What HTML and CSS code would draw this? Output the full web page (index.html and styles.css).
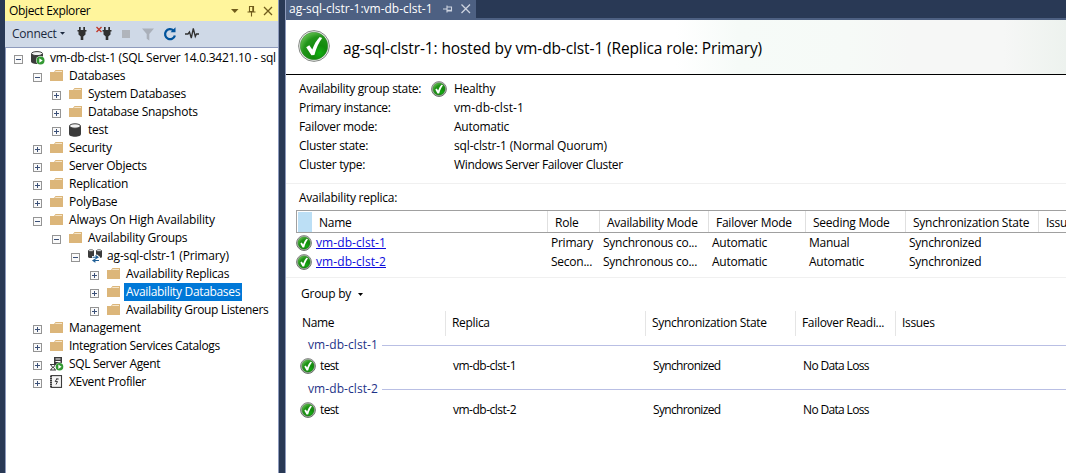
FILE: index.html
```html
<!DOCTYPE html>
<html lang="en">
<head>
<meta charset="utf-8">
<title>ag-sql-clstr-1:vm-db-clst-1</title>
<link rel="stylesheet" href="styles.css">
</head>
<body>
<svg class="defs" width="0" height="0" aria-hidden="true">
  <defs>
    <radialGradient id="green" cx="0.7" cy="0.75" r="0.9">
      <stop offset="0" stop-color="#12b012"/><stop offset="0.3" stop-color="#128a0c"/><stop offset="0.65" stop-color="#22951a"/><stop offset="1" stop-color="#7fd266"/>
    </radialGradient>
    <linearGradient id="ring" x1="0" y1="0" x2="0" y2="1">
      <stop offset="0" stop-color="#8c8c8c"/><stop offset="1" stop-color="#5f6660"/>
    </linearGradient>
    <symbol id="ok-big" viewBox="0 0 32 32">
      <circle cx="16" cy="16" r="15.400" fill="#f4f4f4" stroke="#777c77" stroke-width="0.9"/>
      <circle cx="16" cy="16" r="13.800" fill="url(#green)" stroke="#2f7d2c" stroke-width="0.5"/>
      <path d="M8.200 17.200l3.100-1.900 3 4.200c1.800-5.200 4.200-9.300 7.400-12.600l2.500 1c-3.300 4.300-6 10-7.800 17.100l-3 .2z" fill="#fff"/>
    </symbol>
    <symbol id="ok" viewBox="0 0 16 16">
      <circle cx="8" cy="8" r="7.400" fill="#c3c9c3" stroke="url(#ring)" stroke-width="1"/>
      <circle cx="8" cy="8" r="6.200" fill="url(#green)" stroke="#2f6b2c" stroke-width="0.4"/>
      <path d="M4.300 8.400l1.500-.8 1.300 2c.9-2.500 1.900-4.300 3.400-5.900l1.500.5c-1.600 2.300-2.900 4.900-3.800 8.200h-1.700z" fill="#fff"/>
    </symbol>
    <symbol id="plus" viewBox="0 0 9 9">
      <rect x="0.5" y="0.500" width="8" height="8" fill="#fafafa" stroke="#949494"/>
      <path d="M2 4.500h5M4.500 2v5" stroke="#3b5078" fill="none"/>
    </symbol>
    <symbol id="minus" viewBox="0 0 9 9">
      <rect x="0.5" y="0.500" width="8" height="8" fill="#fafafa" stroke="#949494"/>
      <path d="M2 4.500h5" stroke="#3b5078" fill="none"/>
    </symbol>
    <symbol id="folder" viewBox="0 0 14 14">
      <path d="M0 3h4L5.500 1H13v11H0z" fill="#dcb67a"/><path d="M5.300 2.500H12" stroke="#f5e6cb"/>
    </symbol>
    <symbol id="db" viewBox="0 0 14 14">
      <path d="M0 3v8c0 1.700 2.700 2.800 6 2.800s6-1.100 6-2.800V3z" fill="#3b3b3b"/>
      <ellipse cx="6" cy="3" rx="5.500" ry="2.200" fill="#f3f3f3" stroke="#3b3b3b"/>
    </symbol>
    <symbol id="server" viewBox="0 0 14 14">
      <path d="M0 3v7.500C0 12 2.500 13 5.500 13S12 12 12 10.500V3z" fill="#3b3b3b"/>
      <ellipse cx="6" cy="2.600" rx="5.500" ry="2" fill="#f3f3f3" stroke="#3b3b3b"/>
      <circle cx="9.500" cy="9.500" r="4.500" fill="#fff"/><circle cx="9.500" cy="9.500" r="4" fill="#339933"/>
      <path d="M8.300 7.300v4.400l3.400-2.200z" fill="#fff"/>
    </symbol>
    <symbol id="group" viewBox="0 0 14 14">
      <path d="M0 1.600v6c0 1 1 1.500 3 1.500s3-.5 3-1.500v-6z M8 1.600v6c0 1 1 1.500 3 1.500s3-.5 3-1.500v-6z" fill="#3b3b3b"/>
      <ellipse cx="3" cy="1.600" rx="2.500" ry=".9" fill="#fff" stroke="#3b3b3b" stroke-width=".7"/><ellipse cx="11" cy="1.600" rx="2.500" ry=".9" fill="#fff" stroke="#3b3b3b" stroke-width=".7"/>
      <path d="M4 8.200h5M8 6.200l2.500 2L8 10.200M11 11H6M7.500 9l-2.500 2 2.500 2" stroke="#fff" stroke-width="2.500" fill="none"/>
      <path d="M4.500 8.300H9M7.500 6.500l2.500 1.800-2.500 1.500M11 11.500H6M7.500 10L5 11.500l2.500 1.700" stroke="#1f5f96" stroke-width="1.100" fill="none"/>
    </symbol>
    <symbol id="agent" viewBox="0 0 14 14">
      <path d="M4 0h8v9H4z" fill="#3b3b3b"/><path d="M5.500 2h5M5.500 4.500h5" stroke="#fff"/>
      <path d="M0 7h6v6.500H0z" fill="#fff"/><path d="M0 7.500h6M0 13h6M1 8c0 2.500 4 2 4 5M5 8c0 2.500-4 2-4 5" stroke="#3b3b3b" fill="none"/>
      <circle cx="9.500" cy="9.800" r="4.300" fill="#fff"/><circle cx="9.500" cy="9.800" r="3.800" fill="#339933"/><path d="M8.300 7.600V12l3.300-2.200z" fill="#fff"/>
    </symbol>
    <symbol id="event" viewBox="0 0 14 14">
      <rect x="1" y=".6" width="10.500" height="11.800" fill="#f5f5f5" stroke="#3b3b3b" stroke-width="1.100"/>
      <path d="M1 1v12" stroke="#3b3b3b" stroke-width="2" stroke-dasharray="1 1"/><path d="M7 3.500L5.200 6.500h2.300L6 9.500M6.200 4h2.500" stroke="#3b3b3b" fill="none" stroke-width="1"/>
    </symbol>
    <symbol id="plug" viewBox="0 0 10 14">
      <path d="M2 0h1.700v3H2zM6.300 0H8v3H6.300zM.5 3h9v1.600h-1v3L6.300 9.600V13H3.700V9.600L1.500 7.600v-3h-1z" fill="#303030"/>
    </symbol>
  </defs>
</svg>

<div class="window">
  <aside class="explorer">
    <header class="panel-title">
      <span class="panel-name">Object Explorer</span>
      <svg class="panel-buttons" width="42" height="12" viewBox="0 0 42 12">
        <path d="M0 4h7.500L3.750 8z" fill="#705c1c"/>
        <path d="M18.500 1.500h4v5h-4zM16.500 7h8M20.500 7v4.500M21.800 2v4.500" fill="none" stroke="#705c1c" stroke-width="1.100"/>
        <path d="M33 2l8 8M41 2l-8 8" stroke="#705c1c" stroke-width="1.300"/>
      </svg>
    </header>
    <div class="toolbar">
      <span class="connect">Connect</span>
      <svg class="tools" width="142" height="18" viewBox="0 0 142 18">
        <path d="M0 7h5L2.500 9.800z" fill="#1b293e"/>
        <use href="#plug" x="17" y="2" width="10" height="14"/>
        <use href="#plug" x="42" y="2" width="10" height="14"/>
        <path d="M36.500 2l5 5M41.500 2l-5 5" stroke="#c0392b" stroke-width="1.400"/>
        <rect x="62" y="5" width="8" height="8" fill="#b0b4bb"/>
        <path d="M82 3.500h12l-4.700 5.500v6.500l-2.600-1.800V9z" fill="#aab0ba"/>
        <path d="M113.500 5.500A5 5 0 1 0 114.900 10.500" fill="none" stroke="#00539c" stroke-width="2.300"/>
        <path d="M110.500 7.300h5V2.300z" fill="#00539c"/>
        <path d="M125 9h3l1.500-2 1.800 6 2-9.500 2 8 1.200-2.500h2.500" fill="none" stroke="#303030" stroke-width="1.300"/>
      </svg>
    </div>
    <div class="tree">
      <div class="node root"><svg class="exp"><use href="#minus"/></svg><svg class="ico"><use href="#server"/></svg><span class="label">vm-db-clst-1 (SQL Server 14.0.3421.10 - sql</span></div>
      <div class="node l1"><svg class="exp"><use href="#minus"/></svg><svg class="ico"><use href="#folder"/></svg><span class="label">Databases</span></div>
      <div class="node l2"><svg class="exp"><use href="#plus"/></svg><svg class="ico"><use href="#folder"/></svg><span class="label">System Databases</span></div>
      <div class="node l2"><svg class="exp"><use href="#plus"/></svg><svg class="ico"><use href="#folder"/></svg><span class="label">Database Snapshots</span></div>
      <div class="node l2"><svg class="exp"><use href="#plus"/></svg><svg class="ico"><use href="#db"/></svg><span class="label">test</span></div>
      <div class="node l1"><svg class="exp"><use href="#plus"/></svg><svg class="ico"><use href="#folder"/></svg><span class="label">Security</span></div>
      <div class="node l1"><svg class="exp"><use href="#plus"/></svg><svg class="ico"><use href="#folder"/></svg><span class="label">Server Objects</span></div>
      <div class="node l1"><svg class="exp"><use href="#plus"/></svg><svg class="ico"><use href="#folder"/></svg><span class="label">Replication</span></div>
      <div class="node l1"><svg class="exp"><use href="#plus"/></svg><svg class="ico"><use href="#folder"/></svg><span class="label">PolyBase</span></div>
      <div class="node l1"><svg class="exp"><use href="#minus"/></svg><svg class="ico"><use href="#folder"/></svg><span class="label roomy">Always On High Availability</span></div>
      <div class="node l2"><svg class="exp"><use href="#minus"/></svg><svg class="ico"><use href="#folder"/></svg><span class="label">Availability Groups</span></div>
      <div class="node l3"><svg class="exp"><use href="#minus"/></svg><svg class="ico"><use href="#group"/></svg><span class="label roomy">ag-sql-clstr-1 (Primary)</span></div>
      <div class="node l4"><svg class="exp"><use href="#plus"/></svg><svg class="ico"><use href="#folder"/></svg><span class="label">Availability Replicas</span></div>
      <div class="node l4"><svg class="exp"><use href="#plus"/></svg><svg class="ico"><use href="#folder"/></svg><span class="label selected">Availability Databases</span></div>
      <div class="node l4"><svg class="exp"><use href="#plus"/></svg><svg class="ico"><use href="#folder"/></svg><span class="label tight">Availability Group Listeners</span></div>
      <div class="node l1"><svg class="exp"><use href="#plus"/></svg><svg class="ico"><use href="#folder"/></svg><span class="label">Management</span></div>
      <div class="node l1"><svg class="exp"><use href="#plus"/></svg><svg class="ico"><use href="#folder"/></svg><span class="label tight">Integration Services Catalogs</span></div>
      <div class="node l1"><svg class="exp"><use href="#plus"/></svg><svg class="ico"><use href="#agent"/></svg><span class="label tight">SQL Server Agent</span></div>
      <div class="node l1"><svg class="exp"><use href="#plus"/></svg><svg class="ico"><use href="#event"/></svg><span class="label tight">XEvent Profiler</span></div>
    </div>
  </aside>

  <main class="document">
    <div class="tabs">
      <div class="tab">
        <span class="tab-name">ag-sql-clstr-1:vm-db-clst-1</span>
        <svg class="tab-buttons" width="28" height="12" viewBox="0 0 28 12">
          <path d="M0 6h3.500M4 2.500v7M4 4h4.500v4H4M4 7.200h4.500" fill="none" stroke="#ced4e0" stroke-width="1.100"/>
          <path d="M18.500 1.500l8.500 8.500M27 1.500L18.500 10" stroke="#ced4e0" stroke-width="1.300"/>
        </svg>
      </div>
    </div>
    <header class="banner">
      <svg class="banner-icon"><use href="#ok-big"/></svg>
      <h1 class="banner-title">ag-sql-clstr-1: hosted by vm-db-clst-1 (Replica role: Primary)</h1>
    </header>
    <dl class="details">
      <dt>Availability group state:</dt><dd class="state"><svg class="ok"><use href="#ok"/></svg>Healthy</dd>
      <dt>Primary instance:</dt><dd class="host">vm-db-clst-1</dd>
      <dt>Failover mode:</dt><dd>Automatic</dd>
      <dt>Cluster state:</dt><dd class="roomy">sql-clstr-1 (Normal Quorum)</dd>
      <dt>Cluster type:</dt><dd class="tight">Windows Server Failover Cluster</dd>
    </dl>
    <section class="replicas">
      <h2 class="section-label">Availability replica:</h2>
      <div class="grid">
        <div class="grid-head">
          <span class="marker"></span><span class="name">Name</span><span>Role</span><span>Availability Mode</span><span>Failover Mode</span><span>Seeding Mode</span><span>Synchronization State</span><span>Issues</span>
        </div>
        <div class="grid-row">
          <svg class="ok"><use href="#ok"/></svg><a class="link host">vm-db-clst-1</a><span>Primary</span><span>Synchronous co...</span><span>Automatic</span><span>Manual</span><span>Synchronized</span>
        </div>
        <div class="grid-row">
          <svg class="ok"><use href="#ok"/></svg><a class="link host">vm-db-clst-2</a><span>Secon...</span><span>Synchronous co...</span><span>Automatic</span><span>Automatic</span><span>Synchronized</span>
        </div>
      </div>
    </section>
    <section class="databases">
      <div class="group-by">Group by<svg width="5" height="3" viewBox="0 0 5 3"><path d="M0 0h5L2.500 3z"/></svg></div>
      <div class="list-head"><span>Name</span><span>Replica</span><span>Synchronization State</span><span>Failover Readi...</span><span>Issues</span></div>
      <div class="group-title host">vm-db-clst-1</div>
      <div class="list-row"><span class="first"><svg class="ok"><use href="#ok"/></svg>test</span><span class="replica">vm-db-clst-1</span><span>Synchronized</span><span>No Data Loss</span></div>
      <div class="group-title host">vm-db-clst-2</div>
      <div class="list-row"><span class="first"><svg class="ok"><use href="#ok"/></svg>test</span><span class="replica">vm-db-clst-2</span><span>Synchronized</span><span>No Data Loss</span></div>
    </section>
  </main>
</div>
</body>
</html>
```
FILE: styles.css
```css
* { box-sizing: border-box; }
body {
  margin: 0;
  overflow: hidden;
  font: 12px/18px "Open Sans", "Noto Sans", sans-serif;
  letter-spacing: -0.25px;
  color: #000;
}
svg { display: block; flex: none; }
.defs { position: absolute; }
.window {
  display: flex;
  width: 1066px;
  height: 473px;
  padding-left: 5px;
  gap: 6px;
  background: #293955;
}
.host { letter-spacing: 0.08px; }
.roomy { letter-spacing: -0.15px; }
.tight { letter-spacing: -0.35px; }

/* Object Explorer */
.explorer { display: flex; flex-direction: column; width: 274px; flex: none; border: solid #8e9bbc; border-width: 0 1px 0 0; overflow: hidden; }
.panel-title { display: flex; align-items: center; justify-content: space-between; height: 21px; flex: none; padding: 0 5px 0 4px; background: #fff59c; }
.panel-name { letter-spacing: -0.35px; }
.panel-buttons { width: 42px; }
.toolbar { display: flex; align-items: center; height: 27px; flex: none; padding-left: 7px; background: #cfd9e7; color: #1b293e; border-bottom: 1px solid #8e9bbc; }
.connect { width: 48px; white-space: nowrap; }
.tree { flex: 1; padding-top: 1px; border-left: 1px solid #8e9bbc; background: #fff; }
.node { display: flex; align-items: center; height: 18px; white-space: nowrap; padding-left: var(--indent); }
.root { --indent: 8px; letter-spacing: -0.27px; }
.l1 { --indent: 27px; }
.l2 { --indent: 46px; }
.l3 { --indent: 65px; }
.l4 { --indent: 84px; }
.exp { width: 9px; height: 9px; margin: 2px 8px 0 0; }
.ico { width: 14px; height: 14px; margin-right: 3px; }
.label { padding: 0 2px; }
.selected { background: #0078d7; color: #fff; letter-spacing: -0.33px; }

/* Document area */
.document { display: flex; flex-direction: column; flex: 1; min-width: 0; background: #fff; border-left: 1px solid #8e9bbc; }
.tabs { height: 20px; flex: none; background: #293955; border-bottom: 2px solid #4d6082; }
.tab { display: flex; align-items: center; width: 190px; height: 18px; padding-left: 3px; background: #4d6082; color: #fff; white-space: nowrap; }
.tab-name { width: 154px; letter-spacing: 0; }
.banner { display: flex; align-items: center; height: 55px; flex: none; padding: 0 0 2px 12px; border-bottom: 1px solid #000; background: linear-gradient(90deg, #fff 50%, #f6fbf8 58%, #f6faf7 72%, #f6f7f6 80%, #f6f7f6 92%, #edf2ee); }
.banner-icon { width: 32px; height: 32px; margin-right: 13px; }
.banner-title { margin: 3px 0 0; font-size: 15.500px; font-weight: 400; line-height: 22px; white-space: nowrap; letter-spacing: -0.12px; }
.details { display: grid; grid-template-columns: 155px 1fr; grid-auto-rows: 19px; align-items: center; height: 109px; flex: none; margin: 0; padding: 4px 0 0 13px; border-bottom: 1px solid #f0f0f0; }
.details dt { letter-spacing: -0.32px; }
.details dd { margin: 0; }
.ok { width: 16px; height: 16px; }
.details .state { display: flex; align-items: center; gap: 7px; margin-left: -23px; }
.replicas { height: 94px; flex: none; border-bottom: 1px solid #f0f0f0; }
.section-label { margin: 0; padding: 5px 0 3px 13px; font-size: 12px; font-weight: 400; line-height: 18px; }
.grid { margin-left: 10px; overflow: hidden; }
.grid-head, .grid-row { display: grid; grid-template-columns: 16px 236px 52px 109px 97px 100px 133px 60px; align-items: center; white-space: nowrap; }
.grid-head { height: 23px; border: solid #a0a0a0; border-width: 1px 0 1px 1px; grid-template-columns: 15px 236px 52px 109px 97px 100px 133px 60px; }
.grid-head span { height: 21px; line-height: 23px; padding-left: 7px; border-right: 1px solid #e0e0e0; }
.grid-head .marker { padding: 0; border: solid #fff; border-width: 1px 0 0 1px; background: #bcdff5; }
.grid-row { height: 19px; }
.grid-row span { padding-left: 3px; line-height: 20px; }
.link { padding-left: 4px; color: #0c0cdc; text-decoration: underline; line-height: 20px; }
.databases { padding-left: 10px; }
.group-by { display: flex; align-items: center; gap: 7px; height: 32px; padding-left: 5px; }
.list-head, .list-row { display: grid; grid-template-columns: 150px 200px 150px 100px 1fr; white-space: nowrap; }
.list-head { height: 25px; line-height: 24px; margin-top: 1px; letter-spacing: -0.32px; }
.list-head span { padding-left: 6px; border-right: 1px solid #e5e5e5; }
.list-head span:last-child { border: 0; }
.group-title { display: flex; align-items: center; gap: 4px; height: 18px; padding-left: 12px; color: #1e3287; }
.group-title::after { content: ""; flex: 1; height: 1px; background: #b9bfe4; }
.list-row { height: 26px; line-height: 22px; padding-bottom: 3px; align-items: center; letter-spacing: -0.65px; }
.list-row span { padding-left: 7px; }
.list-row .replica { letter-spacing: -0.5px; }
.list-row .first { display: flex; align-items: center; gap: 4px; padding-left: 4px; }
```
